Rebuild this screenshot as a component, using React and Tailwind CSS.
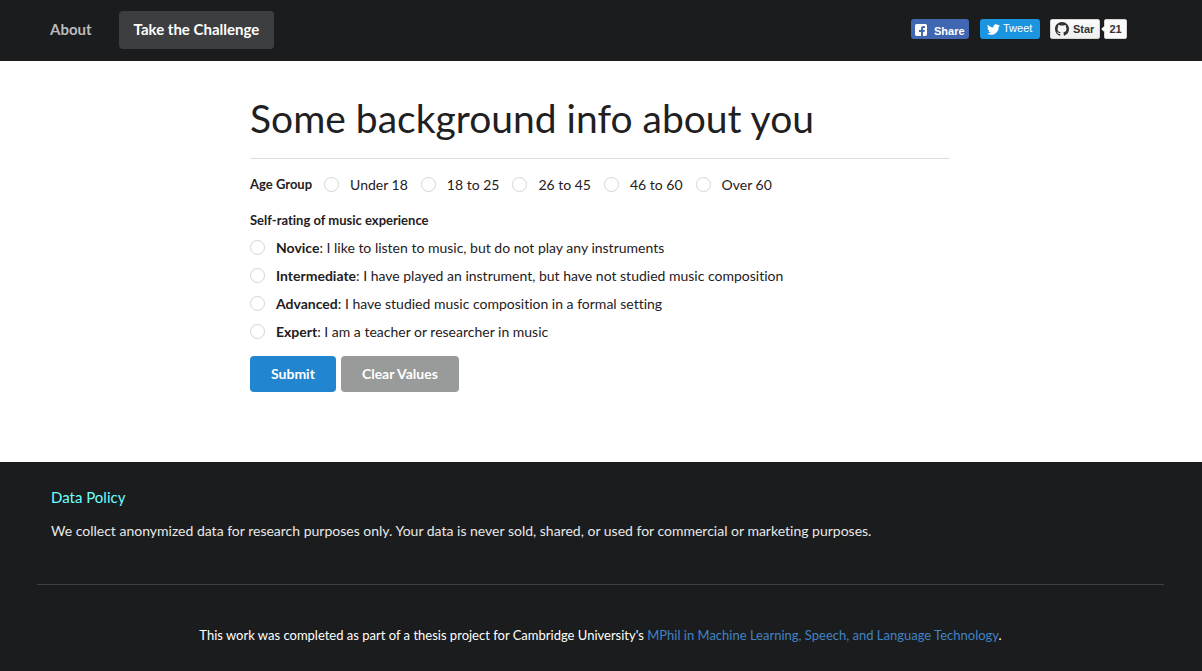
import { FaTwitter } from "react-icons/fa";

const ages = ["Under 18", "18 to 25", "26 to 45", "46 to 60", "Over 60"];

const levels = [
  ["Novice", "I like to listen to music, but do not play any instruments"],
  ["Intermediate", "I have played an instrument, but have not studied music composition"],
  ["Advanced", "I have studied music composition in a formal setting"],
  ["Expert", "I am a teacher or researcher in music"],
];

function Radio({ name, value, children }) {
  return (
    <label className="flex items-center gap-[11px] text-sm leading-[17px]">
      <input
        type="radio"
        name={name}
        value={value}
        className="size-[15px] shrink-0 appearance-none rounded-full border border-[#d4d4d5] bg-white checked:border-4 checked:border-[#2185d0]"
      />
      <span>{children}</span>
    </label>
  );
}

function FacebookIcon() {
  return (
    <svg viewBox="0 0 16 16" className="size-4 shrink-0" fill="currentColor" aria-hidden="true">
      <path
        fillRule="evenodd"
        d="M8 14H3.667C2.733 13.9 2 13.167 2 12.233V3.667A1.65 1.65 0 0 1 3.667 2h8.666A1.65 1.65 0 0 1 14 3.667v8.566c0 .934-.733 1.667-1.667 1.767H10v-3.967h1.3l.7-2.066h-2V6.933c0-.466.167-.9.867-.9H12v-1.8c.033 0-.933-.266-1.533-.266-1.267 0-2.434.7-2.467 2.133v1.867H6v2.066h2V14z"
      />
    </svg>
  );
}

function GithubIcon() {
  return (
    <svg viewBox="0 0 16 16" className="size-3.5 shrink-0" fill="currentColor" aria-hidden="true">
      <path d="M8 0C3.58 0 0 3.58 0 8c0 3.54 2.29 6.53 5.47 7.59.4.07.55-.17.55-.38 0-.19-.01-.82-.01-1.49-2.01.37-2.53-.49-2.69-.94-.09-.23-.48-.94-.82-1.13-.28-.15-.68-.52-.01-.53.63-.01 1.08.58 1.23.82.72 1.21 1.87.87 2.33.66.07-.52.28-.87.51-1.07-1.78-.2-3.64-.89-3.64-3.95 0-.87.31-1.59.82-2.15-.08-.2-.36-1.02.08-2.12 0 0 .67-.21 2.2.82.64-.18 1.32-.27 2-.27s1.36.09 2 .27c1.53-1.04 2.2-.82 2.2-.82.44 1.1.16 1.92.08 2.12.51.56.82 1.27.82 2.15 0 3.07-1.87 3.75-3.65 3.95.29.25.54.73.54 1.48 0 1.07-.01 1.93-.01 2.2 0 .21.15.46.55.38A8.01 8.01 0 0 0 16 8c0-4.42-3.58-8-8-8z" />
    </svg>
  );
}

function Header() {
  return (
    <header className="flex items-center justify-between bg-[#1b1c1d] pt-[11px] pr-[75px] pb-3 pl-[35px]">
      <nav className="flex items-center gap-3 text-[15px] leading-[18px] font-bold">
        <a href="#about" className="rounded px-[15px] pt-[9px] pb-[11px] text-[#bbbbbb]">
          About
        </a>
        <a href="#challenge" className="rounded bg-[#3d3e3f] px-[15px] pt-[9px] pb-[11px] text-white">
          Take the Challenge
        </a>
      </nav>
      <div className="flex items-center pb-0.5 font-['Liberation_Sans',Arial,sans-serif] text-[11px] leading-[18px]">
        <button type="button" className="mr-[11px] flex h-5 w-[58px] items-center gap-[5px] rounded-[3px] bg-[#4267b2] pt-0.5 pl-0.5 font-bold text-white">
          <FacebookIcon />
          <span className="pt-0.5">Share</span>
        </button>
        <a href="#tweet" className="mr-2.5 flex h-5 w-[60px] items-center gap-[3px] rounded-[3px] bg-[#1b95e0] pl-[7px] text-white">
          <FaTwitter className="size-[13px]" />
          <span className="pb-0.5">Tweet</span>
        </a>
        <a href="#star" className="mr-1 flex h-5 w-[50px] items-center gap-1 rounded-[2px] border border-[#d5d5d5] bg-linear-to-b from-[#fcfcfc] to-[#eeeeee] pl-1 font-bold text-[#333333]">
          <GithubIcon />
          Star
        </a>
        <a href="#stargazers" className="relative flex h-5 w-[23px] items-center justify-center rounded-[2px] border border-[#d4d4d4] bg-[#fafafa] font-bold text-[#333333]">
          <span className="absolute top-[7px] -left-[3px] size-1 rotate-45 bg-[#fafafa]" />
          21
        </a>
      </div>
    </header>
  );
}

export default function App() {
  return (
    <div className="flex min-h-screen flex-col bg-white font-[Lato,sans-serif] text-sm text-[#1f2021] [font-variant-ligatures:none]">
      <Header />
      <main className="pt-[34px] pr-0.5 pb-[70px]">
        <div className="mx-auto w-full max-w-[700px]">
          <h1 className="border-b border-[#dededf] pb-4 text-[39px] leading-[47px]">
            Some background info about you
          </h1>
          <form>
            <fieldset className="mt-[17px] flex flex-wrap items-center gap-[13px]">
              <legend className="float-left -mr-px text-[13px] leading-[17px] font-bold">Age Group</legend>
              {ages.map((age) => (
                <Radio key={age} name="age" value={age}>
                  {age}
                </Radio>
              ))}
            </fieldset>
            <fieldset className="mt-[19px] flex flex-col gap-[11px]">
              <legend className="mb-2.5 text-[13px] leading-[17px] font-bold">
                Self-rating of music experience
              </legend>
              {levels.map(([level, text]) => (
                <Radio key={level} name="experience" value={level}>
                  <strong>{level}</strong>: {text}
                </Radio>
              ))}
            </fieldset>
            <div className="mt-4 flex gap-[5px] leading-[14px] font-bold text-white">
              <button type="submit" className="h-9 rounded bg-[#2185d0] px-[21px]">
                Submit
              </button>
              <button type="reset" className="h-9 rounded bg-[#999a9a] px-[21px]">
                Clear Values
              </button>
            </div>
          </form>
        </div>
      </main>
      <footer className="grow bg-[#1b1c1d] pt-[26px] pr-[38px] pl-[37px] text-[#e8e8e8]">
        <section className="px-3.5">
          <h2 className="text-[15px] leading-[19px] text-[#6dffff]">Data Policy</h2>
          <p className="mt-3.5 leading-5">
            We collect anonymized data for research purposes only. Your data is never sold, shared, or used for
            commercial or marketing purposes.
          </p>
        </section>
        <hr className="mt-[43px] border-[#3e3f40]" />
        <p className="py-10 text-center text-[13px] leading-5 text-white">
          This work was completed as part of a thesis project for Cambridge University's{" "}
          <a href="#mphil" className="text-[#4183c4]">
            MPhil in Machine Learning, Speech, and Language Technology
          </a>
          .
        </p>
      </footer>
    </div>
  );
}
